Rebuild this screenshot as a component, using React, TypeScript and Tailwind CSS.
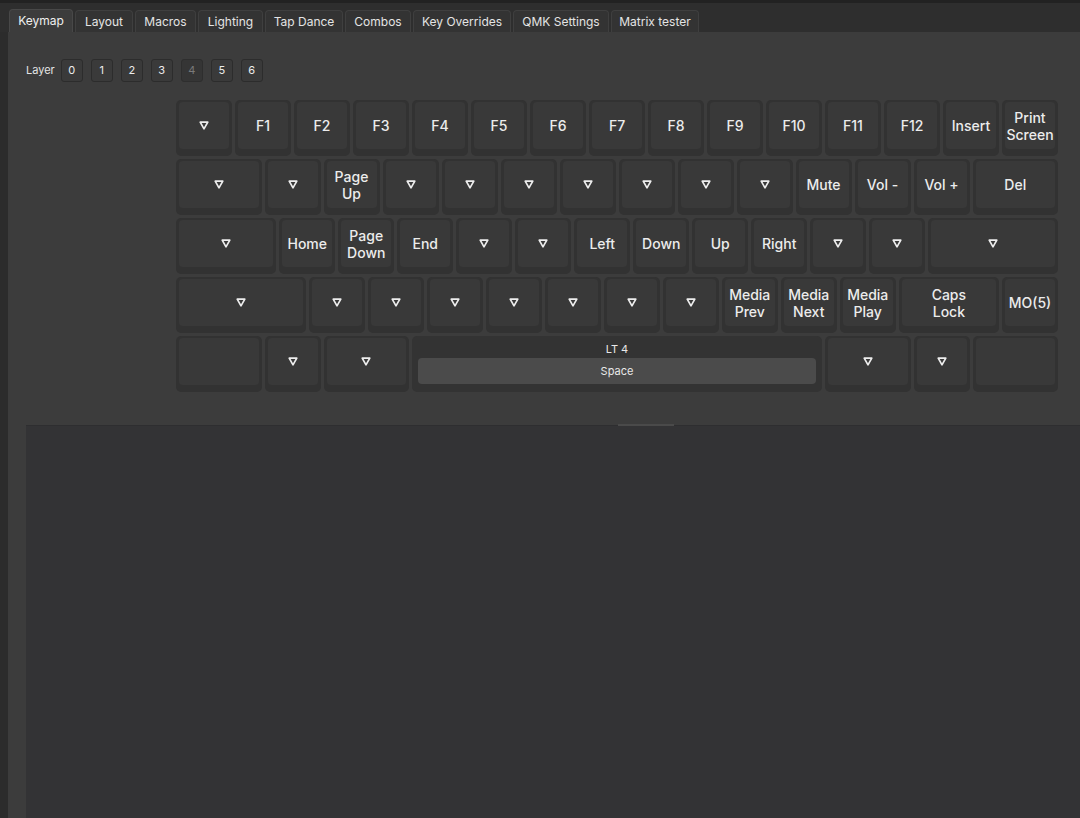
import React from "react";

type KeyDef = { label?: string; u?: number; tri?: boolean; top?: string };

const tabs = [
  { name: "Keymap", w: "w-[64px]", active: true },
  { name: "Layout", w: "w-[58px]" },
  { name: "Macros", w: "w-[61px]" },
  { name: "Lighting", w: "w-[65px]" },
  { name: "Tap Dance", w: "w-[78px]" },
  { name: "Combos", w: "w-[66px]" },
  { name: "Key Overrides", w: "w-[98px]" },
  { name: "QMK Settings", w: "w-[96px]" },
  { name: "Matrix tester", w: "w-[88px]" },
];

const widthClass: Record<number, string> = {
  1: "w-[56px]",
  1.5: "w-[85.5px]",
  1.75: "w-[100.25px]",
  2.25: "w-[129.75px]",
  7: "w-[410px]",
};

const T: KeyDef = { tri: true };

const rows: KeyDef[][] = [
  [T, { label: "F1" }, { label: "F2" }, { label: "F3" }, { label: "F4" }, { label: "F5" }, { label: "F6" }, { label: "F7" }, { label: "F8" }, { label: "F9" }, { label: "F10" }, { label: "F11" }, { label: "F12" }, { label: "Insert" }, { label: "Print\nScreen" }],
  [{ tri: true, u: 1.5 }, T, { label: "Page\nUp" }, T, T, T, T, T, T, T, { label: "Mute" }, { label: "Vol -" }, { label: "Vol +" }, { label: "Del", u: 1.5 }],
  [{ tri: true, u: 1.75 }, { label: "Home" }, { label: "Page\nDown" }, { label: "End" }, T, T, { label: "Left" }, { label: "Down" }, { label: "Up" }, { label: "Right" }, T, T, { tri: true, u: 2.25 }],
  [{ tri: true, u: 2.25 }, T, T, T, T, T, T, T, { label: "Media\nPrev" }, { label: "Media\nNext" }, { label: "Media\nPlay" }, { label: "Caps\nLock", u: 1.75 }, { label: "MO(5)" }],
  [{ u: 1.5 }, T, { tri: true, u: 1.5 }, { top: "LT 4", label: "Space", u: 7 }, { tri: true, u: 1.5 }, T, { u: 1.5 }],
];

function Triangle() {
  return (
    <svg width="10" height="9" viewBox="0 0 10 9" aria-hidden="true">
      <polygon points="1.2,1.2 8.8,1.2 5,7.8" fill="none" stroke="#ededed" strokeWidth="1.7" strokeLinejoin="round" />
    </svg>
  );
}

function Key({ k }: { k: KeyDef }) {
  const w = widthClass[k.u ?? 1];
  if (k.top) {
    return (
      <div className={`${w} h-[56px] shrink-0 rounded-[5px] bg-[#333333] px-[6px] pt-[4px] flex flex-col`}>
        <div className="h-[18px] flex items-center justify-center text-[11px] text-[#e8e8e8]">{k.top}</div>
        <div className="h-[26px] rounded-[4px] bg-[#4b4b4b] flex items-center justify-center text-[11px] text-[#e8e8e8]">
          {k.label}
        </div>
      </div>
    );
  }
  return (
    <div className={`${w} h-[56px] shrink-0 rounded-[5px] bg-[#323232] px-[3px] pt-[2px] pb-[7px]`}>
      <div className="h-full rounded-[4px] bg-[#393939] flex items-center justify-center text-center text-[14px] leading-[17px] font-medium text-[#ececec] whitespace-pre-line">
        {k.tri ? <Triangle /> : k.label}
      </div>
    </div>
  );
}

export default function App() {
  return (
    <div className="w-[1080px] h-[818px] overflow-hidden bg-[#2c2c2c] flex flex-col font-['Inter','Liberation_Sans',sans-serif]">
      {/* Top strip */}
      <div className="h-[3px] bg-[#222222]" />
      {/* Tabs */}
      <div className="h-[29px] flex items-end gap-[2px] pl-[9px] bg-[#2e2e2e]">
        {tabs.map((t) =>
          t.active ? (
            <div
              key={t.name}
              className={`${t.w} h-[23px] rounded-t-[4px] bg-[#3c3c3c] border border-b-0 border-[#484848] flex items-center justify-center text-[12px] text-[#f0f0f0]`}
            >
              {t.name}
            </div>
          ) : (
            <div
              key={t.name}
              className={`${t.w} h-[22px] rounded-t-[4px] bg-[#333333] border border-b-0 border-[#3f3f3f] flex items-center justify-center text-[12px] text-[#e4e4e4]`}
            >
              {t.name}
            </div>
          )
        )}
      </div>

      {/* Panel */}
      <div className="flex-1 ml-[8px] bg-[#3c3c3c] flex flex-col">
        {/* Layer selector */}
        <div className="mt-[26px] pl-[18px] h-[24px] flex items-center">
          <span className="text-[11px] text-[#e4e4e4] mr-[6px]">Layer</span>
          <div className="flex gap-[8px]">
            {["0", "1", "2", "3", "4", "5", "6"].map((n) => (
              <div
                key={n}
                className={
                  n === "4"
                    ? "w-[22px] h-[23px] rounded-[3px] bg-[#353535] border border-[#2e2e2e] flex items-center justify-center text-[11px] text-[#7a7a7a]"
                    : "w-[22px] h-[23px] rounded-[3px] bg-[#3a3a3a] border border-[#2c2c2c] flex items-center justify-center text-[11px] text-[#ececec]"
                }
              >
                {n}
              </div>
            ))}
          </div>
        </div>

        {/* Keyboard */}
        <div className="mt-[18px] ml-[168px] flex flex-col gap-[3px]">
          {rows.map((row, i) => (
            <div key={i} className="flex gap-[3px]">
              {row.map((k, j) => (
                <Key key={j} k={k} />
              ))}
            </div>
          ))}
        </div>

        {/* Lower pane */}
        <div className="mt-[33px] ml-[18px] flex-1 bg-[#333335] border-t border-[#2e2e30] relative">
          <div className="absolute -top-[2px] left-[592px] w-[56px] h-[2px] bg-[#4a4a4a]" />
        </div>
      </div>
    </div>
  );
}
